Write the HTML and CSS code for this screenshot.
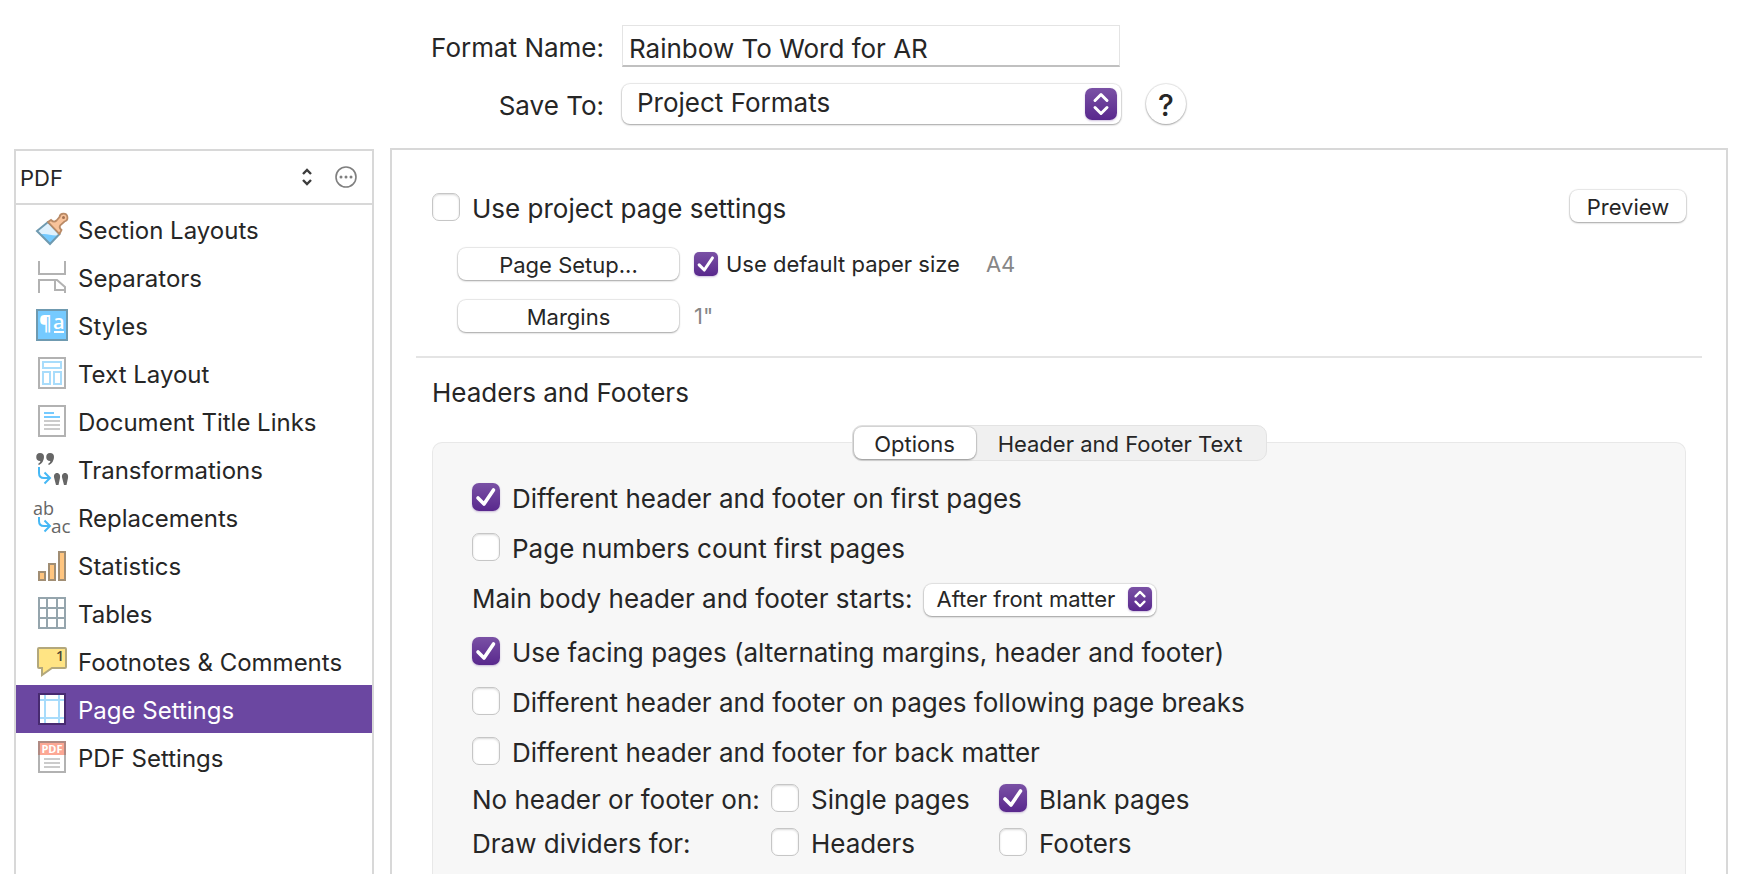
FILE: index.html
```
<!DOCTYPE html>
<html lang="en">
<head>
    <meta charset="UTF-8">
    <meta name="viewport" content="width=device-width, initial-scale=1.0">
    <title>Compile Format</title>
    <link rel="stylesheet" href="styles.css">
</head>
<body>
    <header class="format-form">
        <label for="format-name">Format Name:</label>
        <input type="text" id="format-name" class="name-field" value="Rainbow To Word for AR">
        <label for="save-to">Save To:</label>
        <div class="save-row">
            <div class="popup popup-large">
                <select id="save-to">
                    <option>Project Formats</option>
                    <option>My Formats</option>
                </select>
                <svg class="popup-arrows" viewBox="0 0 32 32"><path d="M10 12.500L16 6.500L22 12.500M10 19.500L16 25.500L22 19.500"/></svg>
            </div>
            <button type="button" class="help-button" aria-label="Help">?</button>
        </div>
    </header>

    <div class="columns">
        <aside class="sidebar">
            <div class="sidebar-head">
                <select class="type-select" aria-label="Output type">
                    <option>PDF</option>
                </select>
                <svg class="type-arrows" viewBox="0 0 12 18"><path d="M2 6L6 2L10 6M2 12L6 16L10 12"/></svg>
                <button type="button" class="more-button" aria-label="More options">
                    <svg viewBox="0 0 24 24">
                        <circle cx="12" cy="12" r="10" fill="none" stroke="#7f7f7f" stroke-width="1.6"/>
                        <g fill="#7f7f7f"><circle cx="7" cy="12" r="1.500"/><circle cx="12" cy="12" r="1.500"/><circle cx="17" cy="12" r="1.500"/></g>
                    </svg>
                </button>
            </div>
            <nav class="sections">
                <a href="#">
                    <svg viewBox="0 0 36 36">
                        <path d="M3 20L14 11L25.500 23L16 33Z" fill="#dff1fd"/>
                        <path d="M7 23.500C12 22 17 25 23.500 24.500L16 33Z" fill="#75caff"/>
                        <path d="M3 20L14 11L25.500 23L16 33Z" fill="none" stroke="#6f9ab0" stroke-width="2"/>
                        <path d="M14 11L17 9Q20 12 22.500 9.500L25.500 6A4 4 0 1 1 30.500 10.500L26.500 14Q24.500 16.500 27.500 19L25.500 23Z" fill="#f8c39b" stroke="#b98a66" stroke-width="1.800"/>
                        <circle cx="29.500" cy="6.500" r="1.500" fill="#a47251"/>
                    </svg>
                    <span>Section Layouts</span>
                </a>
                <a href="#">
                    <svg viewBox="0 0 36 36" fill="none" stroke="#b2b2b2" stroke-width="2">
                        <path d="M5 2V15H31V2M5 34V21H23L31 28V34M21 21V31H31"/>
                    </svg>
                    <span>Separators</span>
                </a>
                <a href="#">
                    <svg viewBox="0 0 36 36">
                        <rect x="3" y="3" width="30" height="30" fill="#75caff" stroke="#6f9ab0" stroke-width="2"/>
                        <text class="glyph" x="5" y="23" font-size="19" font-weight="700" fill="#fff">¶</text>
                        <text class="glyph" x="19" y="22" font-size="20" font-weight="600" fill="#fff">a</text>
                        <path d="M20 25H30" stroke="#fff" stroke-width="2"/>
                    </svg>
                    <span>Styles</span>
                </a>
                <a href="#">
                    <svg viewBox="0 0 36 36" fill="#fff" stroke-width="2">
                        <rect x="5" y="3" width="26" height="30" stroke="#b2b2b2"/>
                        <path d="M9 7H27V13H9ZM9 17H16V29H9ZM20 17H27V29H20Z" stroke="#a8dcfb"/>
                    </svg>
                    <span>Text Layout</span>
                </a>
                <a href="#">
                    <svg viewBox="0 0 36 36" fill="#fff" stroke-width="2">
                        <rect x="5" y="3" width="26" height="30" stroke="#b2b2b2"/>
                        <path d="M10 10H20M10 14H26" stroke="#75caff"/>
                        <path d="M10 18H26M10 22H26M10 26H26" stroke="#cbcbcb"/>
                    </svg>
                    <span>Document Title Links</span>
                </a>
                <a href="#">
                    <svg viewBox="0 0 36 36">
                        <path d="M6 2A4 4 0 1 0 6.500 10Q6 12 4 13L5 14Q10 11 10 6A4 4 0 0 0 6 2ZM16 2A4 4 0 1 0 16.500 10Q16 12 14 13L15 14Q20 11 20 6A4 4 0 0 0 16 2Z" fill="#666"/>
                        <path d="M5 16V22Q5 27 10 27H16M10.500 21.500L16 27L10.500 32.500" fill="none" stroke="#46b8f5" stroke-width="2"/>
                        <path d="M23 22C25.500 22 26.500 24.500 26 27L24.500 34H22L20.200 27C19.500 24.500 20.500 22 23 22ZM31 22C33.500 22 34.500 24.500 34 27L32.500 34H30L28.200 27C27.500 24.500 28.500 22 31 22Z" fill="#666"/>
                    </svg>
                    <span>Transformations</span>
                </a>
                <a href="#">
                    <svg viewBox="0 0 36 36">
                        <text class="glyph" x="-1" y="16" font-size="18" fill="#666">ab</text>
                        <path d="M5 18V22Q5 27 10 27H16M10.500 21.500L16 27L10.500 32.500" fill="none" stroke="#46b8f5" stroke-width="2"/>
                        <text class="glyph" x="17" y="34" font-size="19" fill="#666">ac</text>
                    </svg>
                    <span>Replacements</span>
                </a>
                <a href="#">
                    <svg viewBox="0 0 36 36">
                        <path d="M5 25H11V33H5ZM15 17H21V33H15ZM25 5H31V33H25Z" fill="#ffc57f" stroke="#a18e74" stroke-width="2"/>
                    </svg>
                    <span>Statistics</span>
                </a>
                <a href="#">
                    <svg viewBox="0 0 36 36" fill="none" stroke="#95a5ad" stroke-width="2">
                        <path d="M5 3H31V33H5ZM13 3V33M23 3V33M5 13H31M5 23H31"/>
                    </svg>
                    <span>Tables</span>
                </a>
                <a href="#">
                    <svg viewBox="0 0 36 36">
                        <path d="M5 5H31Q32 5 32 6V24Q32 25 31 25H18L8 32V25H5Q4 25 4 24V6Q4 5 5 5Z" fill="#ffe484" stroke="#b3a87c" stroke-width="2"/>
                        <text class="glyph" x="22" y="18" font-size="14" font-weight="600" fill="#4b4636">1</text>
                    </svg>
                    <span>Footnotes &amp; Comments</span>
                </a>
                <a href="#" class="selected" aria-current="page">
                    <svg viewBox="0 0 36 36" stroke-width="2">
                        <rect x="4" y="2" width="28" height="32" fill="#fff"/>
                        <path d="M11 3V33M25 3V33M5 9H31M5 27H31" stroke="#a8dcfb"/>
                        <rect x="5" y="3" width="26" height="30" fill="none" stroke="#472a70"/>
                    </svg>
                    <span>Page Settings</span>
                </a>
                <a href="#">
                    <svg viewBox="0 0 36 36" stroke-width="2">
                        <rect x="5" y="3" width="26" height="30" fill="#fff" stroke="#b2b2b2"/>
                        <path d="M5 16V3H31V16" fill="#fca794" stroke="#b08a83"/>
                        <text class="glyph" x="18" y="14" font-size="11" font-weight="700" text-anchor="middle" fill="#fff" stroke="none">PDF</text>
                        <path d="M10 20H26M10 24H26M10 28H26" stroke="#cbcbcb"/>
                    </svg>
                    <span>PDF Settings</span>
                </a>
            </nav>
        </aside>

        <main class="settings">
            <div class="project-row">
                <label class="check"><input type="checkbox"><span>Use project page settings</span></label>
                <button type="button" class="preview-button">Preview</button>
            </div>
            <div class="paper">
                <button type="button">Page Setup...</button>
                <div class="paper-info">
                    <label class="check check-small"><input type="checkbox" checked><span>Use default paper size</span></label>
                    <span class="muted">A4</span>
                </div>
                <button type="button">Margins</button>
                <span class="muted">1"</span>
            </div>
            <hr>
            <h2>Headers and Footers</h2>
            <div class="tabs" role="tablist">
                <button type="button" class="active" role="tab" aria-selected="true">Options</button>
                <button type="button" role="tab" aria-selected="false">Header and Footer Text</button>
            </div>
            <section class="options">
                <label class="check"><input type="checkbox" checked><span>Different header and footer on first pages</span></label>
                <label class="check"><input type="checkbox"><span>Page numbers count first pages</span></label>
                <div class="start-row">
                    <label for="body-start">Main body header and footer starts:</label>
                    <div class="popup popup-small">
                        <select id="body-start">
                            <option>After front matter</option>
                        </select>
                        <svg class="popup-arrows" viewBox="0 0 32 32"><path d="M10 12.500L16 6.500L22 12.500M10 19.500L16 25.500L22 19.500"/></svg>
                    </div>
                </div>
                <label class="check"><input type="checkbox" checked><span>Use facing pages (alternating margins, header and footer)</span></label>
                <label class="check"><input type="checkbox"><span>Different header and footer on pages following page breaks</span></label>
                <label class="check"><input type="checkbox"><span>Different header and footer for back matter</span></label>
                <div class="check-grid">
                    <span>No header or footer on:</span>
                    <label class="check"><input type="checkbox"><span>Single pages</span></label>
                    <label class="check"><input type="checkbox" checked><span>Blank pages</span></label>
                    <span>Draw dividers for:</span>
                    <label class="check"><input type="checkbox"><span>Headers</span></label>
                    <label class="check"><input type="checkbox"><span>Footers</span></label>
                </div>
            </section>
        </main>
    </div>
</body>
</html>
```
FILE: styles.css
```
* {
    box-sizing: border-box;
}

body {
    margin: 0;
    min-height: 100vh;
    display: flex;
    flex-direction: column;
    background: #fff;
    color: #262626;
    font-family: Inter, "Liberation Sans", sans-serif;
    font-size: 26px;
    line-height: 30px;
}

button,
input,
select {
    font: inherit;
    color: inherit;
    margin: 0;
}

button,
.popup select {
    background: #fff;
    border: 0;
    border-radius: 8px;
    box-shadow: 0 0 1px 1px rgba(0, 0, 0, 0.09), 0 1px 2px rgba(0, 0, 0, 0.3);
    font-size: 22px;
    padding: 0;
}

/* Format name and destination */
.format-form {
    display: grid;
    grid-template-columns: 604px 1fr;
    column-gap: 18px;
    row-gap: 17px;
    align-items: center;
    padding: 25px 0 24px;
}

.format-form > label {
    padding-top: 3px;
    text-align: right;
}

.name-field {
    width: 498px;
    height: 42px;
    padding: 5px 6px 0;
    border: 1px solid #e4e4e4;
    border-bottom: 2px solid #c0c0c0;
    background: #fff;
}

.save-row {
    display: flex;
    align-items: center;
    gap: 25px;
}

.popup {
    position: relative;
}

.popup select {
    appearance: none;
    width: 100%;
    height: 100%;
}

.popup-arrows {
    position: absolute;
    border-radius: 7px;
    background: linear-gradient(#7a51a5, #59288d);
    box-shadow: 0 1px 2px rgba(89, 40, 141, 0.3);
    fill: none;
    stroke: #fff;
    stroke-width: 3;
    stroke-linecap: round;
    stroke-linejoin: round;
    pointer-events: none;
}

.popup-large {
    width: 499px;
    height: 40px;
}

.popup-large select {
    padding: 0 50px 2px 15px;
    font-size: 26px;
}

.popup-large .popup-arrows {
    top: 4px;
    right: 4px;
    width: 32px;
    height: 32px;
}

.popup-small {
    width: 232px;
    height: 32px;
}

.popup-small select {
    padding: 0 30px 2px 12px;
}

.popup-small .popup-arrows {
    top: 4px;
    right: 4px;
    width: 24px;
    height: 24px;
    border-radius: 5px;
}

.help-button {
    width: 40px;
    height: 40px;
    padding-top: 2px;
    border-radius: 50%;
    font-size: 30px;
    font-weight: 500;
}

/* Sidebar and settings panel */
.columns {
    flex: 1;
    display: grid;
    grid-template-columns: 360px 1fr;
    gap: 16px;
    padding: 0 22px 0 14px;
}

.sidebar {
    margin-top: 1px;
    border: 2px solid #d8d8d8;
    border-bottom: 0;
}

.sidebar-head {
    display: flex;
    align-items: center;
    height: 54px;
    padding: 0 14px 0 4px;
    border-bottom: 2px solid #d8d8d8;
}

.type-select {
    flex: 1;
    appearance: none;
    border: 0;
    padding: 2px 0 0;
    background: none;
    font-size: 22px;
}

.type-arrows {
    width: 12px;
    height: 18px;
    margin-right: 21px;
    fill: none;
    stroke: #3c3c3c;
    stroke-width: 2.4;
}

.more-button {
    width: 24px;
    height: 24px;
    background: none;
    box-shadow: none;
}

.more-button svg {
    display: block;
}

.sections {
    font-size: 24px;
}

.sections a {
    display: flex;
    align-items: center;
    gap: 8px;
    height: 48px;
    padding-left: 18px;
    color: inherit;
    text-decoration: none;
    white-space: nowrap;
}

.sections svg {
    flex: none;
    width: 36px;
    height: 36px;
    overflow: visible;
}

.sections span,
.check span,
.check-grid > span {
    padding-top: 3px;
}

.sections .selected {
    background: #6b47a1;
    color: #fff;
}

.glyph {
    font-family: "Open Sans", sans-serif;
}

.settings {
    display: flex;
    flex-direction: column;
    border: 2px solid #d8d8d8;
    border-bottom: 0;
    padding: 40px 24px 0;
}

/* Check boxes */
.check {
    display: flex;
    align-items: center;
    gap: 12px;
}

.check input {
    appearance: none;
    flex: none;
    width: 28px;
    height: 28px;
    border: 1px solid #c6c6c6;
    border-radius: 7px;
    background: #fff;
    box-shadow: inset 0 1px 2px rgba(0, 0, 0, 0.15);
}

.check input:checked {
    border: 0;
    background: url('data:image/svg+xml,<svg xmlns="http://www.w3.org/2000/svg" viewBox="0 0 28 28"><path d="M6 15L12 21L21.500 7" fill="none" stroke="white" stroke-width="3.600" stroke-linecap="round" stroke-linejoin="round"/></svg>') center / 100%, linear-gradient(#7a51a5, #59288d);
    box-shadow: 0 1px 2px rgba(89, 40, 141, 0.3);
}

.check-small {
    gap: 8px;
}

.check-small input {
    width: 24px;
    height: 24px;
    border-radius: 5px;
}

.check-small span {
    padding-top: 0;
}

/* Page settings */
.project-row {
    display: flex;
    justify-content: space-between;
    align-items: flex-start;
    height: 58px;
    padding: 0 16px;
}

.project-row .check {
    height: 34px;
}

.preview-button {
    width: 116px;
    height: 32px;
    padding-top: 2px;
}

.paper {
    display: grid;
    grid-template-columns: 221px 1fr;
    column-gap: 15px;
    row-gap: 20px;
    align-items: center;
    padding: 0 42px;
    font-size: 22px;
}

.paper button {
    height: 32px;
    padding-top: 2px;
}

.paper-info {
    display: flex;
    align-items: center;
    gap: 26px;
}

.muted {
    color: #868686;
}

hr {
    width: 100%;
    margin: 24px 0 20px;
    border: 0;
    border-top: 2px solid #e4e4e4;
}

h2 {
    margin: 0 16px;
    font-size: 26px;
    font-weight: 400;
}

/* Tabs straddle the top edge of the options box */
.tabs {
    position: relative;
    display: flex;
    align-self: center;
    width: 415px;
    height: 36px;
    margin: 17px 0 -19px;
    padding: 1px;
    border: 1px solid #e3e3e3;
    border-radius: 10px;
    background: #f0f0f0;
}

.tabs button {
    flex: 1;
    padding-top: 2px;
    background: none;
    box-shadow: none;
    white-space: nowrap;
}

.tabs .active {
    flex: 0 0 122px;
    background: #fff;
    box-shadow: 0 0 1px 1px rgba(0, 0, 0, 0.12), 0 1px 2px rgba(0, 0, 0, 0.3);
}

.options {
    flex: 1;
    margin: 0 16px;
    padding: 29px 39px 0;
    border: 1px solid #e8e8e8;
    border-bottom: 0;
    border-radius: 10px 10px 0 0;
    background: #f7f7f7;
}

.options > .check {
    height: 50px;
}

.start-row {
    display: flex;
    align-items: center;
    gap: 12px;
    height: 54px;
}

.check-grid {
    display: grid;
    grid-template-columns: 299px 228px 1fr;
    grid-auto-rows: 44px;
    align-items: center;
}
```
